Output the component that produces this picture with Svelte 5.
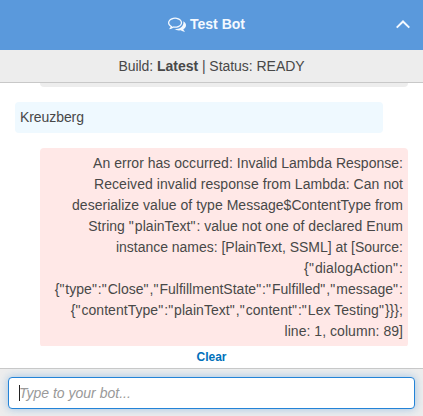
<script>
  // Each line of the error carries its own tracking, in pixels.
  const errorLines = [
    ['An error has occurred: Invalid Lambda Response:', 0.02],
    ['Received invalid response from Lambda: Can not', 0.05],
    ['deserialize value of type Message$ContentType from', 0.02],
    ['String "plainText": value not one of declared Enum', 0.035],
    ['instance names: [PlainText, SSML] at [Source:', -0.02],
    ['{"dialogAction":', 0.15],
    ['{"type":"Close","FulfillmentState":"Fulfilled","message":', 0.01],
    ['{"contentType":"plainText","content":"Lex Testing"}}};', 0.045],
    ['line: 1, column: 89]', 0.05]
  ].map(([text, tracking]) => ({ parts: text.split(/(")/), tracking }));
</script>

<div class="panel">
  <header>
    <svg class="comments" viewBox="0 0 1792 1792" fill="currentColor">
      <path d="M704 384q-153 0-286 52t-211.500 141-78.500 191q0 82 53 158t149 132l97 56-35 84q34-20 62-39l44-31 53 10q78 14 153 14 153 0 286-52t211.500-141 78.500-191-78.500-191-211.500-141-286-52zm0-128q191 0 353.500 68.500t256.500 186.500 94 257-94 257-256.500 186.500-353.500 68.500q-86 0-176-16-124 88-278 128-36 9-86 16h-3q-11 0-20.500-8t-11.500-21q-1-3-1-6.500t.5-6.500 2-6l2.500-5 3.500-5.500 4-5 4.500-5 4-4.500q5-6 23-25t26-29.500 22.500-29 25-38.500 20.500-44q-124-72-195-177t-71-224q0-139 94-257t256.500-186.500 353.500-68.500zm822 1169q10 24 20.500 44t25 38.500 22.500 29 26 29.500 23 25q1 1 4 4.500t4.500 5 4 5 3.500 5.500l2.500 5 2 6 .5 6.500-1 6.500q-3 14-13 22t-22 7q-50-7-86-16-154-40-278-128-90 16-176 16-271 0-472-132 58 4 88 4 161 0 309-45t264-129q125-92 192-212t67-254q0-77-23-152 129 71 204 178t75 230q0 120-71 224.500t-195 176.500z" />
    </svg>
    <span>Test Bot</span>
    <svg class="chevron" viewBox="0 0 14 9" fill="none" stroke="currentColor" stroke-width="2"><path d="M.7 7.6 7 1.5l6.300 6.100" /></svg>
  </header>
  <div class="status">Build: <b>Latest</b> | Status: READY</div>
  <main>
    <div class="bubble bot previous"></div>
    <div class="bubble user">Kreuzberg</div>
    <div class="bubble bot error">
      {#each errorLines as line}
        <div style="letter-spacing: {line.tracking}px">{#each line.parts as part}{#if part === '"'}<span class="quote">"</span>{:else}{part}{/if}{/each}</div>
      {/each}
    </div>
  </main>
  <div class="clear">Clear</div>
  <footer>
    <div class="input"><i class="caret"></i><span>Type to your bot...</span></div>
  </footer>
</div>

<style>
  .panel {
    width: 423px;
    height: 416px;
    display: flex;
    flex-direction: column;
    overflow: hidden;
    background: #fff;
    color: #484848;
    font: 14px/21px "Liberation Sans", Arial, sans-serif;
  }
  header {
    height: 50px;
    flex: none;
    display: flex;
    align-items: center;
    box-sizing: border-box;
    padding: 0 13px 2px 168px;
    background: #5a99dc;
    color: #f4f9ff;
    font-weight: bold;
  }
  .comments { width: 18px; height: 18px; margin: 0 4px 0 0; }
  .chevron { width: 14px; height: 9px; margin-left: auto; }
  .status {
    height: 32px;
    flex: none;
    border-bottom: 1px solid #c8c8c8;
    background: #ededed;
    line-height: 32px;
    text-align: center;
    letter-spacing: -0.04px;
  }
  main {
    height: 263px;
    flex: none;
    display: flex;
    flex-direction: column;
    gap: 15px;
    padding: 0 15px;
    overflow: hidden;
  }
  .bubble {
    width: 368px;
    flex: none;
    box-sizing: border-box;
    padding: 5px;
    border-radius: 4px;
  }
  .bot { align-self: flex-end; background: #ededed; text-align: right; white-space: nowrap; }
  .previous { height: 31px; margin-top: -27px; }
  .user { background: #eff9ff; letter-spacing: -0.08px; }
  .error { background: #ffe8e7; }
  .quote { letter-spacing: 1px; }
  .clear {
    height: 22px;
    flex: none;
    color: #0070ba;
    font-size: 12px;
    font-weight: bold;
    line-height: 23px;
    text-align: center;
  }
  footer {
    flex: 1;
    border-top: 1px solid #c8c8c8;
    padding: 8px 8px 7px;
    background: #ededed;
  }
  .input {
    height: 32px;
    box-sizing: border-box;
    display: flex;
    align-items: center;
    padding-left: 10px;
    border: 1px solid #2383d7;
    border-radius: 4px;
    box-shadow: 0 0 8px rgba(35, 131, 215, 0.4);
    background: #fff;
    color: #999;
    font-style: italic;
  }
  .input span { margin-left: -1px; }
  .caret { width: 1px; height: 16px; background: #222; }
</style>
